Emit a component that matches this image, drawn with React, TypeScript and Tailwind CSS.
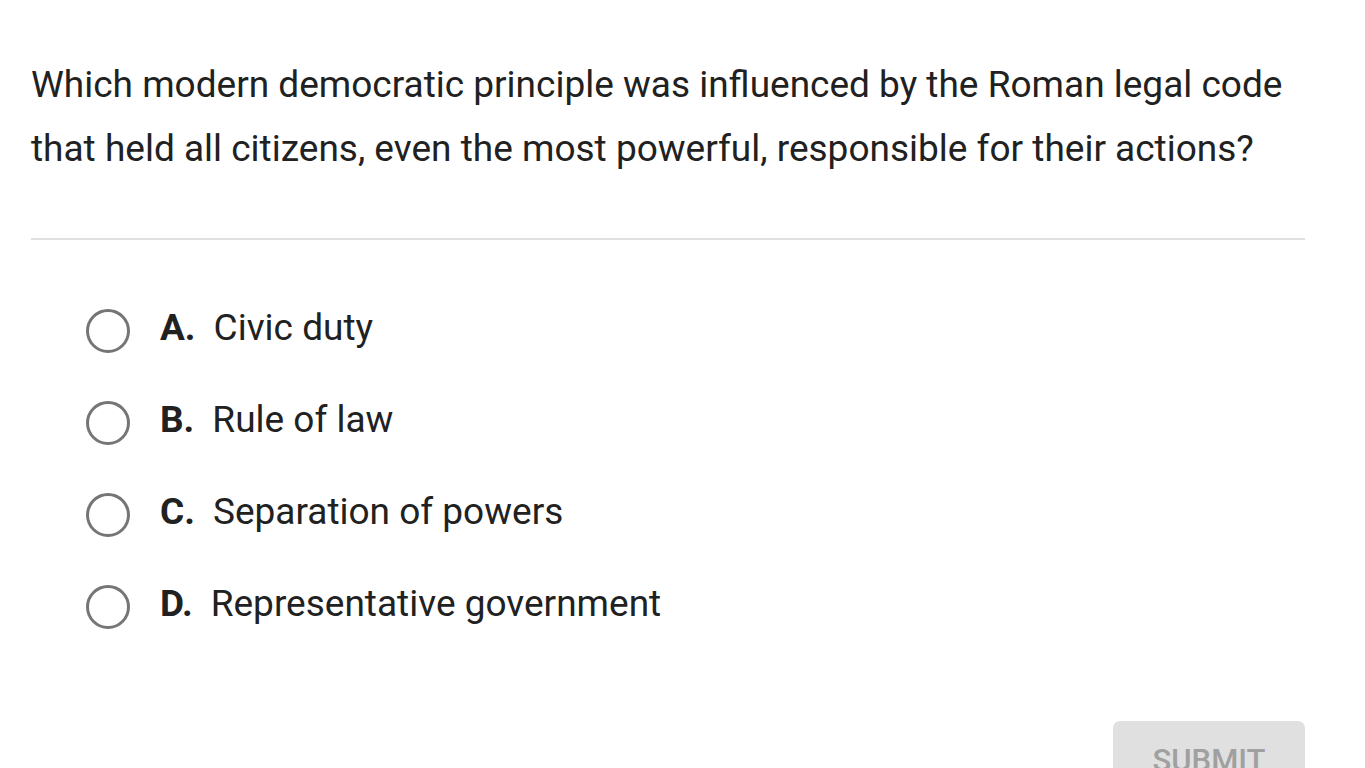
const options = [
  { letter: 'A.', text: 'Civic duty' },
  { letter: 'B.', text: 'Rule of law' },
  { letter: 'C.', text: 'Separation of powers' },
  { letter: 'D.', text: 'Representative government' },
];

export default function App() {
  return (
    <div className="min-h-screen bg-white pl-[31px] pr-[60px] pt-[53px] text-[#212121]" style={{ fontFamily: 'Roboto, "Noto Sans", sans-serif' }}>
      {/* Question */}
      <p className="whitespace-nowrap text-[37px] leading-[64px]">
        Which modern democratic principle was influenced by the Roman legal code
        <br />
        that held all citizens, even the most powerful, responsible for their actions?
      </p>

      <div className="mt-[57px] h-[2px] bg-[#e0e0e0]" />

      {/* Options */}
      <div className="mt-[45px] flex flex-col pl-[55px]">
        {options.map((o) => (
          <label key={o.letter} className="flex h-[92px] items-center">
            <span className="h-[44px] w-[44px] shrink-0 rounded-full border-[3.5px] border-[#757575]" />
            <span className="ml-[30px] pb-[6px] pr-[18px] text-[37px] font-bold">{o.letter}</span>
            <span className="pb-[6px] text-[37px]">{o.text}</span>
          </label>
        ))}
      </div>

      {/* Submit */}
      <div className="mt-[68px] flex justify-end">
        <button className="h-[64px] w-[192px] rounded-[7px] bg-[#e0e0e0] pt-[16px] text-[31px] font-medium text-[#a0a0a0]">
          SUBMIT
        </button>
      </div>
    </div>
  );
}
